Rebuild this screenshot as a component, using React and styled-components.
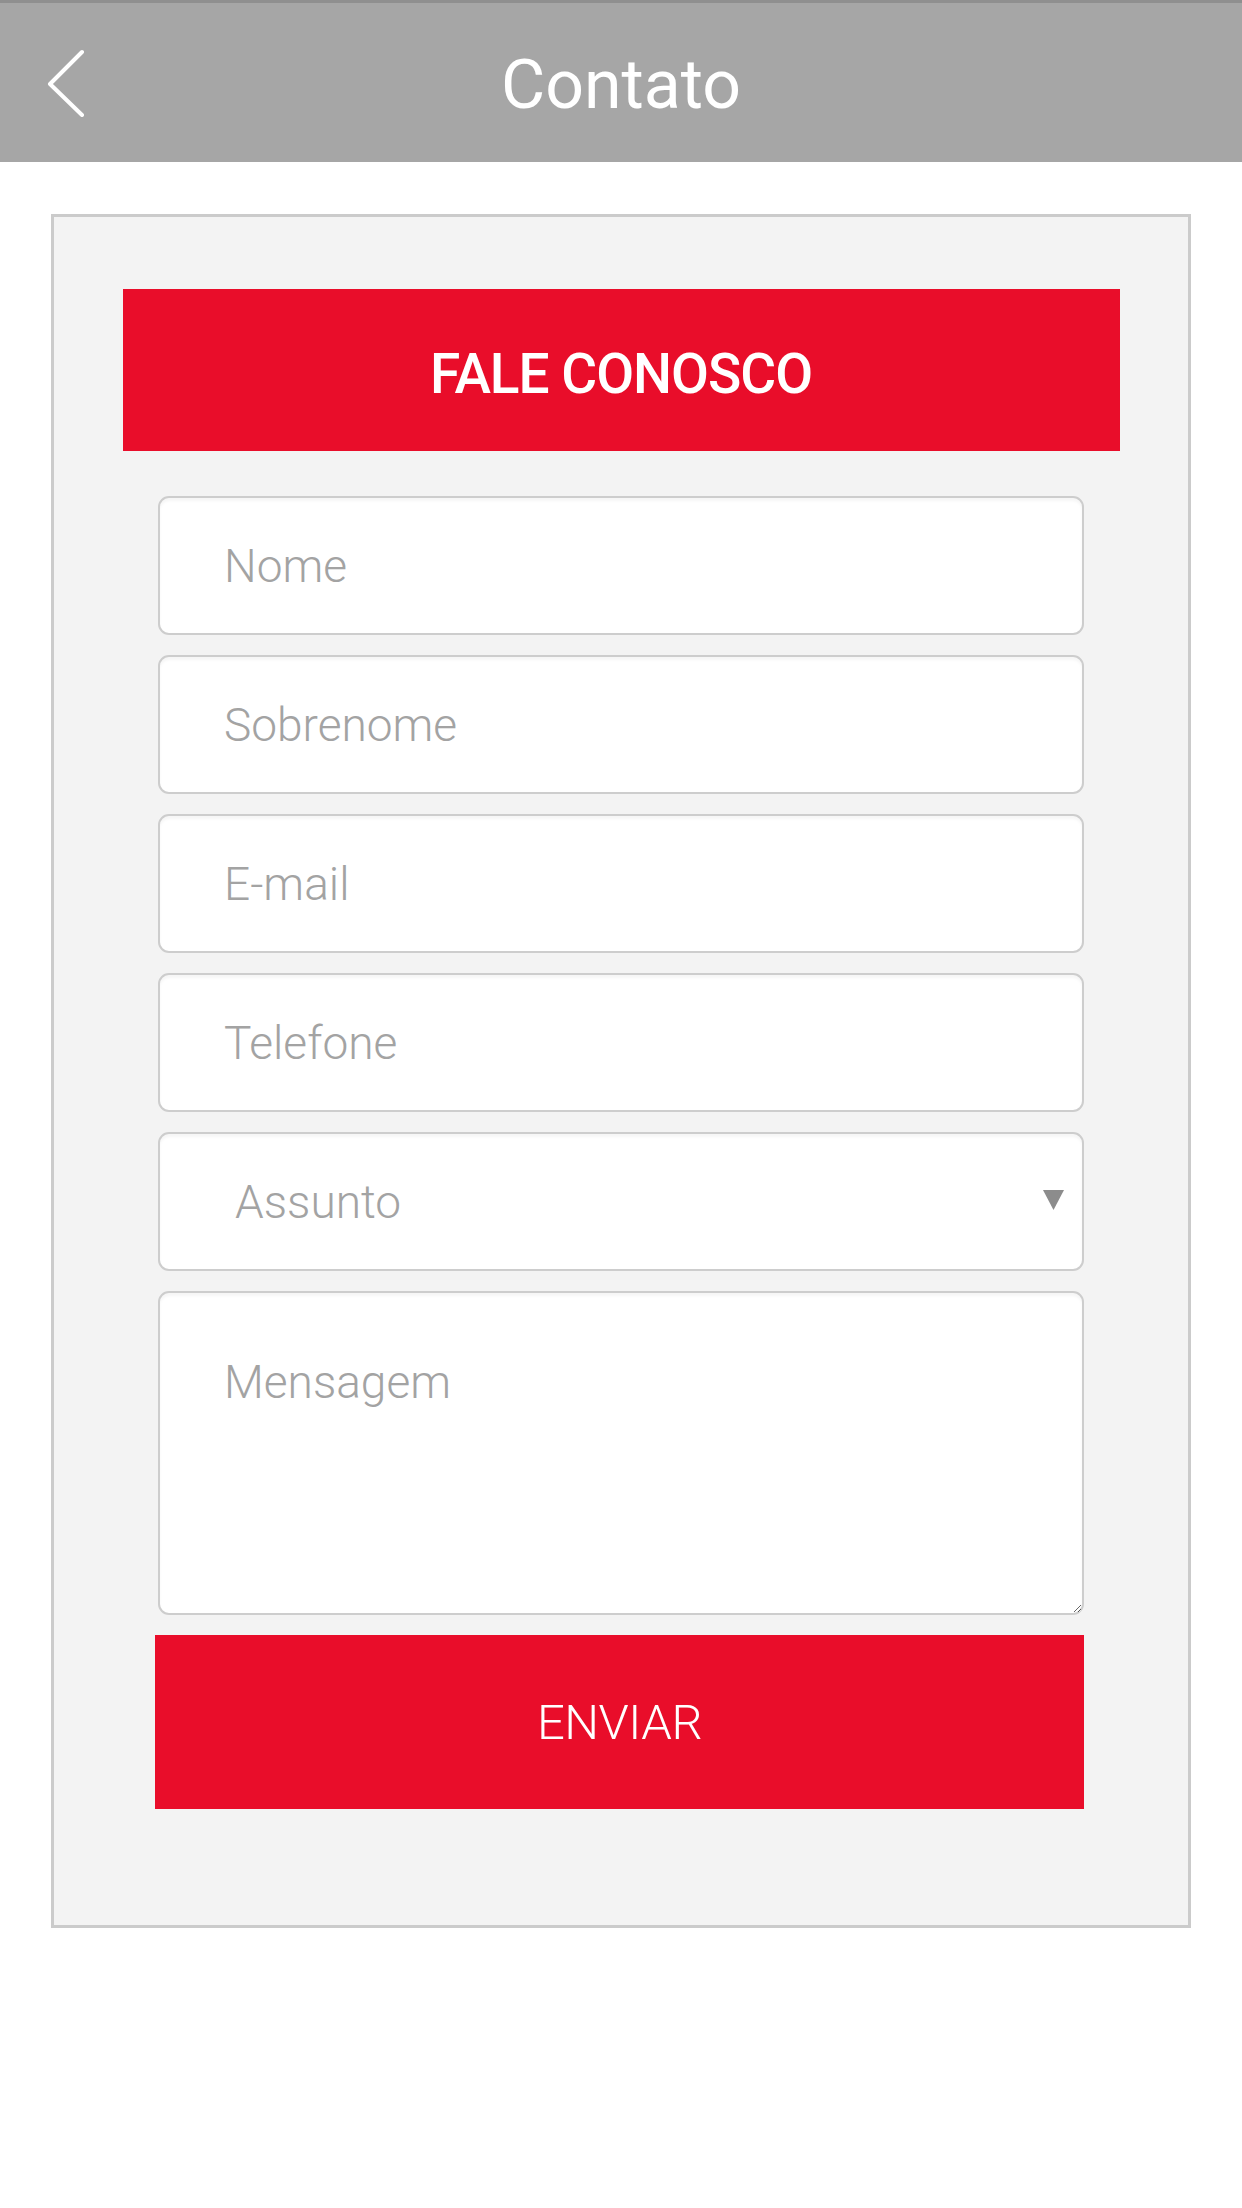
import styled, { createGlobalStyle } from 'styled-components'

const GlobalStyle = createGlobalStyle`
	* { box-sizing: border-box; }
	body {
		margin: 0;
		background: #fff;
		font-family: Roboto, "Liberation Sans", Arial, sans-serif;
	}
`

const Page = styled.div`
	display: flex;
	flex-direction: column;
	min-height: 2208px;
	background: #fff;
`

const TopBar = styled.header`
	display: grid;
	grid-template-columns: 1fr auto 1fr;
	align-items: center;
	height: 162px;
	background: #a6a6a6;
	border-top: 3px solid #8f8f8f;
	color: #fff;
`

const BackButton = styled.button`
	justify-self: start;
	display: flex;
	align-items: center;
	margin-left: 46px;
	padding: 0;
	border: 0;
	background: none;
	color: #fff;
	cursor: pointer;
`

const Title = styled.h1`
	margin: 4px 0 0;
	font-family: Roboto, "Liberation Sans", sans-serif;
	font-size: 68px;
	font-weight: 400;
	line-height: 1;
`

const Main = styled.main`
	padding: 52px 51px;
`

const Card = styled.section`
	display: flex;
	flex-direction: column;
	align-items: center;
	padding: 72px 0 116px;
	background: #f3f3f3;
	border: 3px solid #cbcbcb;
`

const Banner = styled.div`
	display: flex;
	align-items: center;
	justify-content: center;
	width: 997px;
	height: 162px;
	padding-top: 8px;
	background: #e90d2a;
	color: #fff;
	font-size: 55px;
	font-weight: 500;
	letter-spacing: -1px;
`

const Form = styled.form`
	display: flex;
	flex-direction: column;
	gap: 20px;
	width: 926px;
	margin-top: 45px;
`

const fieldBase = `
	width: 100%;
	border: 2px solid #cdcdcd;
	border-radius: 11px;
	background: #fff;
	box-shadow: inset 0 3px 3px rgba(0, 0, 0, 0.04);
	font-family: Roboto, "Liberation Sans", sans-serif;
	font-size: 46px;
	font-weight: 300;
	color: #555;
	outline: none;
	&::placeholder { color: #a3a3a3; }
`

const Field = styled.input`
	${fieldBase}
	height: 139px;
	padding: 0 20px 0 64px;
`

const SelectWrap = styled.div`
	position: relative;
`

const Select = styled.select`
	${fieldBase}
	height: 139px;
	padding: 0 60px 0 75px;
	appearance: none;
	color: #a3a3a3;
`

const Caret = styled.svg`
	position: absolute;
	right: 20px;
	top: 58px;
	pointer-events: none;
`

const Message = styled.textarea`
	${fieldBase}
	height: 324px;
	padding: 62px 20px 0 64px;
	line-height: 55px;
	resize: vertical;
`

const SendButton = styled.button`
	height: 174px;
	margin-left: -3px;
	border: 0;
	background: #e90d2a;
	color: #fff;
	font-family: Roboto, "Liberation Sans", sans-serif;
	font-size: 49px;
	font-weight: 300;
	letter-spacing: -0.5px;
	cursor: pointer;
`

const fields = ['Nome', 'Sobrenome', 'E-mail', 'Telefone']

const App = () => {
	return (
		<Page>
			<GlobalStyle />
			<TopBar>
				<BackButton aria-label="Voltar">
					<svg width="40" height="68" viewBox="0 0 40 68" fill="none">
						<path d="M36 3 L4 35 L36 66" stroke="#fff" strokeWidth="4" strokeLinecap="round" strokeLinejoin="round" />
					</svg>
				</BackButton>
				<Title>Contato</Title>
				<div />
			</TopBar>
			<Main>
				<Card>
					<Banner>FALE CONOSCO</Banner>
					<Form onSubmit={(e) => e.preventDefault()}>
						{fields.map((f) => (
							<Field key={f} placeholder={f} />
						))}
						<SelectWrap>
							<Select defaultValue="">
								<option value="" disabled>Assunto</option>
								<option>Dúvidas</option>
								<option>Sugestões</option>
							</Select>
							<Caret width="21" height="20" viewBox="0 0 21 20">
								<path d="M0 0 H21 L10.5 20 Z" fill="#8c8c8c" />
							</Caret>
						</SelectWrap>
						<Message placeholder="Mensagem" />
						<SendButton type="submit">ENVIAR</SendButton>
					</Form>
				</Card>
			</Main>
		</Page>
	)
}

export default App
